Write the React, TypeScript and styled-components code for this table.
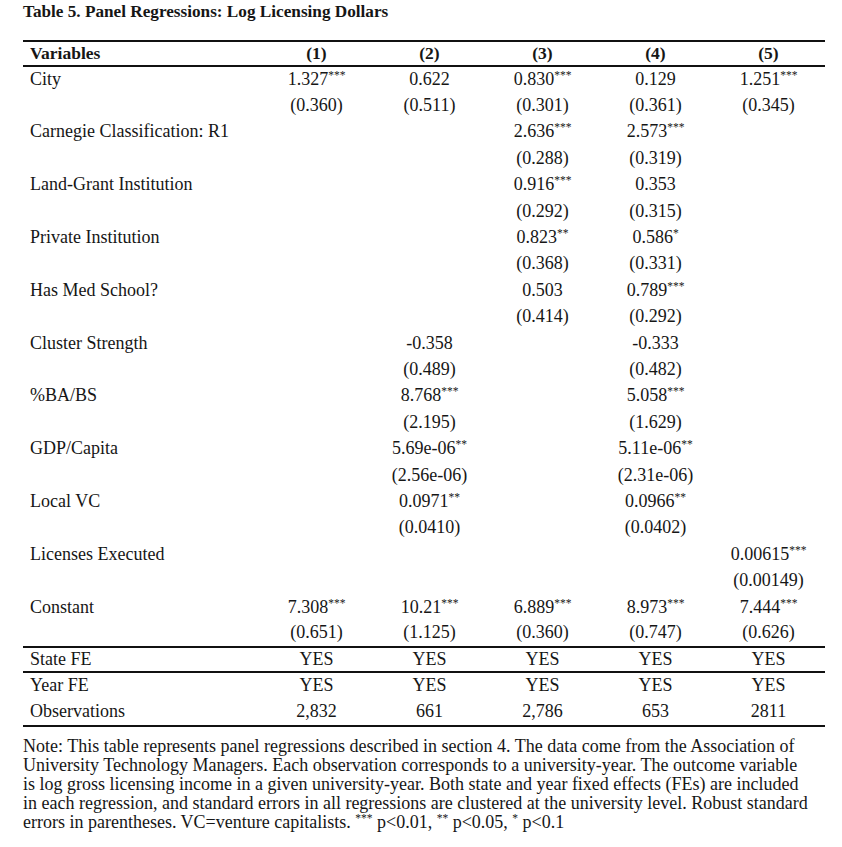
import React from "react";
import styled, { createGlobalStyle } from "styled-components";

const Global = createGlobalStyle`
  html, body { margin: 0; padding: 0; background: #fff; }
  body { font-family: "Liberation Serif", "DejaVu Serif", serif; color: #161616; }
`;

const Page = styled.div`
  width: 842px;
  padding: 2px 17px 0 23px;
  box-sizing: border-box;
`;

const Title = styled.h1`
  margin: 0;
  font-size: 17.2px;
  font-weight: bold;
  line-height: 20px;
  height: 38px;
  white-space: nowrap;
`;

const Table = styled.table`
  width: 802px;
  border-collapse: collapse;
  font-size: 18px;
  table-layout: fixed;
`;

const Head = styled.thead`
  tr { border-top: 2px solid #111; border-bottom: 2px solid #111; }
`;

const HeadCell = styled.th<{ $left?: boolean }>`
  font-weight: bold;
  font-size: 17.5px;
  height: 23px;
  padding: 0 0 0 ${(p) => (p.$left ? "7px" : "0")};
  text-align: ${(p) => (p.$left ? "left" : "center")};
  line-height: 23px;
`;

const Row = styled.tr<{ $bottom?: boolean; $h?: number }>`
  height: ${(p) => p.$h ?? 26.4}px;
  border-bottom: ${(p) => (p.$bottom ? "2px solid #111" : "none")};
`;

const Label = styled.td`
  padding: 0 0 0 7px;
  text-align: left;
  white-space: nowrap;
`;

const Cell = styled.td`
  padding: 0;
  text-align: center;
  white-space: nowrap;
`;

const Stars = styled.sup`
  font-size: 11.5px;
  vertical-align: 6px;
  line-height: 0;
`;

const Note = styled.p`
  margin: 10px 0 0;
  font-size: 18px;
  line-height: 19px;
  white-space: nowrap;
`;

const split = (s: string): [string, string] => {
  const m = s.match(/^([^*]*)(\**)$/);
  return m ? [m[1], m[2]] : [s, ""];
};

const rows: { label: string; coef: (string | null)[]; se: (string | null)[] }[] = [
  { label: "City", coef: ["1.327***", "0.622", "0.830***", "0.129", "1.251***"], se: ["(0.360)", "(0.511)", "(0.301)", "(0.361)", "(0.345)"] },
  { label: "Carnegie Classification: R1", coef: [null, null, "2.636***", "2.573***", null], se: [null, null, "(0.288)", "(0.319)", null] },
  { label: "Land-Grant Institution", coef: [null, null, "0.916***", "0.353", null], se: [null, null, "(0.292)", "(0.315)", null] },
  { label: "Private Institution", coef: [null, null, "0.823**", "0.586*", null], se: [null, null, "(0.368)", "(0.331)", null] },
  { label: "Has Med School?", coef: [null, null, "0.503", "0.789***", null], se: [null, null, "(0.414)", "(0.292)", null] },
  { label: "Cluster Strength", coef: [null, "-0.358", null, "-0.333", null], se: [null, "(0.489)", null, "(0.482)", null] },
  { label: "%BA/BS", coef: [null, "8.768***", null, "5.058***", null], se: [null, "(2.195)", null, "(1.629)", null] },
  { label: "GDP/Capita", coef: [null, "5.69e-06**", null, "5.11e-06**", null], se: [null, "(2.56e-06)", null, "(2.31e-06)", null] },
  { label: "Local VC", coef: [null, "0.0971**", null, "0.0966**", null], se: [null, "(0.0410)", null, "(0.0402)", null] },
  { label: "Licenses Executed", coef: [null, null, null, null, "0.00615***"], se: [null, null, null, null, "(0.00149)"] },
  { label: "Constant", coef: ["7.308***", "10.21***", "6.889***", "8.973***", "7.444***"], se: ["(0.651)", "(1.125)", "(0.360)", "(0.747)", "(0.626)"] },
];

const Value: React.FC<{ s: string | null }> = ({ s }) => {
  if (!s) return <Cell />;
  const [num, st] = split(s);
  return (
    <Cell>
      {num}
      {st && <Stars>{st}</Stars>}
    </Cell>
  );
};

const Plain: React.FC<{ label: string; vals: string[]; h: number; bottom?: boolean }> = ({ label, vals, h, bottom }) => (
  <Row $bottom={bottom} $h={h}>
    <Label>{label}</Label>
    {vals.map((c, j) => (
      <Cell key={j}>{c}</Cell>
    ))}
  </Row>
);

export default function App() {
  return (
    <Page>
      <Global />
      <Title>Table 5. Panel Regressions: Log Licensing Dollars</Title>
      <Table>
        <colgroup>
          <col style={{ width: 237 }} />
          <col style={{ width: 113 }} />
          <col style={{ width: 113 }} />
          <col style={{ width: 113 }} />
          <col style={{ width: 113 }} />
          <col style={{ width: 113 }} />
        </colgroup>
        <Head>
          <tr>
            <HeadCell $left>Variables</HeadCell>
            <HeadCell>(1)</HeadCell>
            <HeadCell>(2)</HeadCell>
            <HeadCell>(3)</HeadCell>
            <HeadCell>(4)</HeadCell>
            <HeadCell>(5)</HeadCell>
          </tr>
        </Head>
        <tbody>
          {rows.map((r, i) => (
            <React.Fragment key={r.label}>
              <Row>
                <Label>{r.label}</Label>
                {r.coef.map((c, j) => (
                  <Value key={j} s={c} />
                ))}
              </Row>
              <Row $bottom={i === rows.length - 1}>
                <Label />
                {r.se.map((c, j) => (
                  <Value key={j} s={c} />
                ))}
              </Row>
            </React.Fragment>
          ))}
          <Plain label="State FE" vals={["YES", "YES", "YES", "YES", "YES"]} h={25} bottom />
          <Plain label="Year FE" vals={["YES", "YES", "YES", "YES", "YES"]} h={27} />
          <Plain label="Observations" vals={["2,832", "661", "2,786", "653", "2811"]} h={27} bottom />
        </tbody>
      </Table>
      <Note>
        Note: This table represents panel regressions described in section 4. The data come from the Association of
        <br />
        University Technology Managers. Each observation corresponds to a university-year. The outcome variable
        <br />
        is log gross licensing income in a given university-year. Both state and year fixed effects (FEs) are included
        <br />
        in each regression, and standard errors in all regressions are clustered at the university level. Robust standard
        <br />
        errors in parentheses. VC=venture capitalists. <Stars>***</Stars> p&lt;0.01, <Stars>**</Stars> p&lt;0.05,{" "}
        <Stars>*</Stars> p&lt;0.1
      </Note>
    </Page>
  );
}
